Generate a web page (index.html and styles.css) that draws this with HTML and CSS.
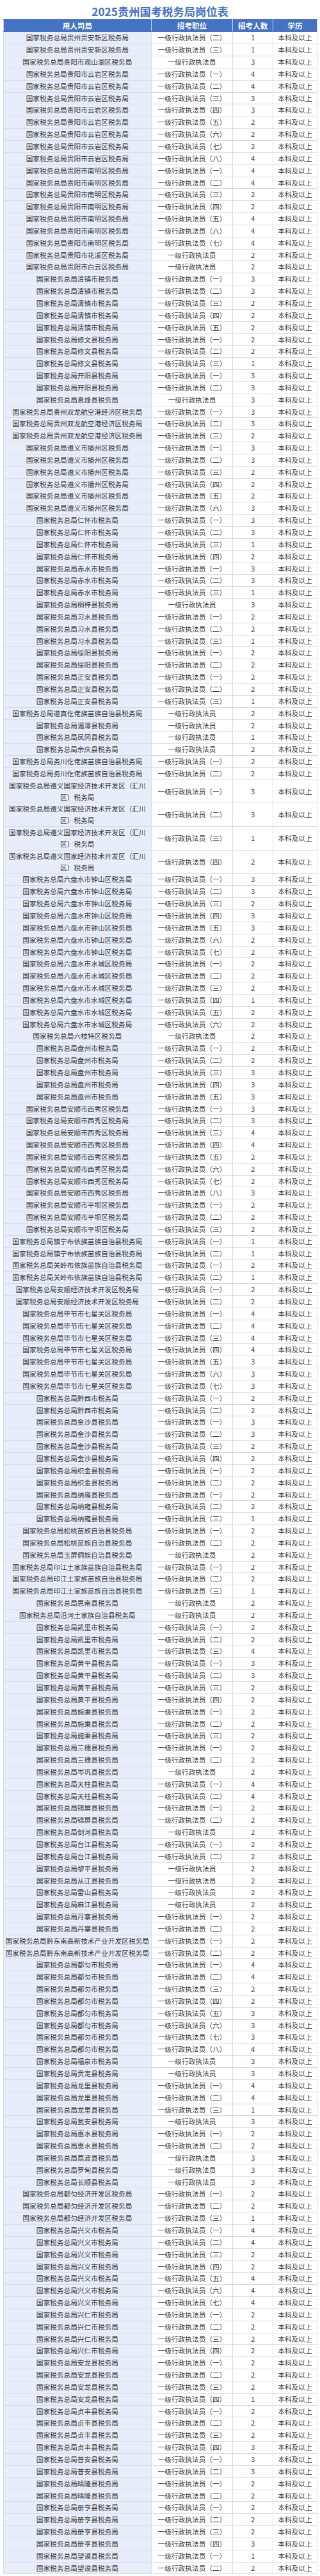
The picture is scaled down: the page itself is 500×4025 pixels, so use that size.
FILE: index.html
```html
<!DOCTYPE html>
<html lang="zh-CN">
<head>
<meta charset="utf-8">
<title>2025贵州国考税务局岗位表</title>
<link rel="stylesheet" href="styles.css">
</head>
<body>
<div class="page">
<h1 class="title">2025贵州国考税务局岗位表</h1>
<table class="jobs">
<colgroup><col class="c-org"><col class="c-pos"><col class="c-num"><col class="c-edu"></colgroup>
<thead><tr><th>用人司局</th><th>招考职位</th><th>招考人数</th><th>学历</th></tr></thead>
<tbody>
<tr><td class="org">国家税务总局贵州贵安新区税务局</td><td>一级行政执法员（二）</td><td>1</td><td>本科及以上</td></tr>
<tr><td class="org">国家税务总局贵州贵安新区税务局</td><td>一级行政执法员（三）</td><td>1</td><td>本科及以上</td></tr>
<tr><td class="org">国家税务总局贵阳市观山湖区税务局</td><td>一级行政执法员</td><td>3</td><td>本科及以上</td></tr>
<tr><td class="org">国家税务总局贵阳市云岩区税务局</td><td>一级行政执法员（一）</td><td>4</td><td>本科及以上</td></tr>
<tr><td class="org">国家税务总局贵阳市云岩区税务局</td><td>一级行政执法员（二）</td><td>4</td><td>本科及以上</td></tr>
<tr><td class="org">国家税务总局贵阳市云岩区税务局</td><td>一级行政执法员（三）</td><td>3</td><td>本科及以上</td></tr>
<tr><td class="org">国家税务总局贵阳市云岩区税务局</td><td>一级行政执法员（四）</td><td>3</td><td>本科及以上</td></tr>
<tr><td class="org">国家税务总局贵阳市云岩区税务局</td><td>一级行政执法员（五）</td><td>2</td><td>本科及以上</td></tr>
<tr><td class="org">国家税务总局贵阳市云岩区税务局</td><td>一级行政执法员（六）</td><td>2</td><td>本科及以上</td></tr>
<tr><td class="org">国家税务总局贵阳市云岩区税务局</td><td>一级行政执法员（七）</td><td>2</td><td>本科及以上</td></tr>
<tr><td class="org">国家税务总局贵阳市云岩区税务局</td><td>一级行政执法员（八）</td><td>4</td><td>本科及以上</td></tr>
<tr><td class="org">国家税务总局贵阳市南明区税务局</td><td>一级行政执法员（一）</td><td>4</td><td>本科及以上</td></tr>
<tr><td class="org">国家税务总局贵阳市南明区税务局</td><td>一级行政执法员（二）</td><td>4</td><td>本科及以上</td></tr>
<tr><td class="org">国家税务总局贵阳市南明区税务局</td><td>一级行政执法员（三）</td><td>2</td><td>本科及以上</td></tr>
<tr><td class="org">国家税务总局贵阳市南明区税务局</td><td>一级行政执法员（四）</td><td>2</td><td>本科及以上</td></tr>
<tr><td class="org">国家税务总局贵阳市南明区税务局</td><td>一级行政执法员（五）</td><td>4</td><td>本科及以上</td></tr>
<tr><td class="org">国家税务总局贵阳市南明区税务局</td><td>一级行政执法员（六）</td><td>4</td><td>本科及以上</td></tr>
<tr><td class="org">国家税务总局贵阳市南明区税务局</td><td>一级行政执法员（七）</td><td>4</td><td>本科及以上</td></tr>
<tr><td class="org">国家税务总局贵阳市花溪区税务局</td><td>一级行政执法员</td><td>2</td><td>本科及以上</td></tr>
<tr><td class="org">国家税务总局贵阳市白云区税务局</td><td>一级行政执法员</td><td>2</td><td>本科及以上</td></tr>
<tr><td class="org">国家税务总局清镇市税务局</td><td>一级行政执法员（一）</td><td>3</td><td>本科及以上</td></tr>
<tr><td class="org">国家税务总局清镇市税务局</td><td>一级行政执法员（二）</td><td>3</td><td>本科及以上</td></tr>
<tr><td class="org">国家税务总局清镇市税务局</td><td>一级行政执法员（三）</td><td>2</td><td>本科及以上</td></tr>
<tr><td class="org">国家税务总局清镇市税务局</td><td>一级行政执法员（四）</td><td>2</td><td>本科及以上</td></tr>
<tr><td class="org">国家税务总局清镇市税务局</td><td>一级行政执法员（五）</td><td>2</td><td>本科及以上</td></tr>
<tr><td class="org">国家税务总局修文县税务局</td><td>一级行政执法员（一）</td><td>2</td><td>本科及以上</td></tr>
<tr><td class="org">国家税务总局修文县税务局</td><td>一级行政执法员（二）</td><td>2</td><td>本科及以上</td></tr>
<tr><td class="org">国家税务总局修文县税务局</td><td>一级行政执法员（三）</td><td>1</td><td>本科及以上</td></tr>
<tr><td class="org">国家税务总局开阳县税务局</td><td>一级行政执法员（一）</td><td>3</td><td>本科及以上</td></tr>
<tr><td class="org">国家税务总局开阳县税务局</td><td>一级行政执法员（二）</td><td>3</td><td>本科及以上</td></tr>
<tr><td class="org">国家税务总局息烽县税务局</td><td>一级行政执法员</td><td>3</td><td>本科及以上</td></tr>
<tr><td class="org">国家税务总局贵州双龙航空港经济区税务局</td><td>一级行政执法员（一）</td><td>3</td><td>本科及以上</td></tr>
<tr><td class="org">国家税务总局贵州双龙航空港经济区税务局</td><td>一级行政执法员（二）</td><td>3</td><td>本科及以上</td></tr>
<tr><td class="org">国家税务总局贵州双龙航空港经济区税务局</td><td>一级行政执法员（三）</td><td>2</td><td>本科及以上</td></tr>
<tr><td class="org">国家税务总局遵义市播州区税务局</td><td>一级行政执法员（一）</td><td>3</td><td>本科及以上</td></tr>
<tr><td class="org">国家税务总局遵义市播州区税务局</td><td>一级行政执法员（二）</td><td>3</td><td>本科及以上</td></tr>
<tr><td class="org">国家税务总局遵义市播州区税务局</td><td>一级行政执法员（三）</td><td>2</td><td>本科及以上</td></tr>
<tr><td class="org">国家税务总局遵义市播州区税务局</td><td>一级行政执法员（四）</td><td>2</td><td>本科及以上</td></tr>
<tr><td class="org">国家税务总局遵义市播州区税务局</td><td>一级行政执法员（五）</td><td>2</td><td>本科及以上</td></tr>
<tr><td class="org">国家税务总局遵义市播州区税务局</td><td>一级行政执法员（六）</td><td>3</td><td>本科及以上</td></tr>
<tr><td class="org">国家税务总局仁怀市税务局</td><td>一级行政执法员（一）</td><td>3</td><td>本科及以上</td></tr>
<tr><td class="org">国家税务总局仁怀市税务局</td><td>一级行政执法员（二）</td><td>3</td><td>本科及以上</td></tr>
<tr><td class="org">国家税务总局仁怀市税务局</td><td>一级行政执法员（三）</td><td>1</td><td>本科及以上</td></tr>
<tr><td class="org">国家税务总局仁怀市税务局</td><td>一级行政执法员（四）</td><td>2</td><td>本科及以上</td></tr>
<tr><td class="org">国家税务总局赤水市税务局</td><td>一级行政执法员（一）</td><td>3</td><td>本科及以上</td></tr>
<tr><td class="org">国家税务总局赤水市税务局</td><td>一级行政执法员（二）</td><td>3</td><td>本科及以上</td></tr>
<tr><td class="org">国家税务总局赤水市税务局</td><td>一级行政执法员（三）</td><td>1</td><td>本科及以上</td></tr>
<tr><td class="org">国家税务总局桐梓县税务局</td><td>一级行政执法员</td><td>3</td><td>本科及以上</td></tr>
<tr><td class="org">国家税务总局习水县税务局</td><td>一级行政执法员（一）</td><td>2</td><td>本科及以上</td></tr>
<tr><td class="org">国家税务总局习水县税务局</td><td>一级行政执法员（二）</td><td>2</td><td>本科及以上</td></tr>
<tr><td class="org">国家税务总局习水县税务局</td><td>一级行政执法员（三）</td><td>1</td><td>本科及以上</td></tr>
<tr><td class="org">国家税务总局绥阳县税务局</td><td>一级行政执法员（一）</td><td>2</td><td>本科及以上</td></tr>
<tr><td class="org">国家税务总局绥阳县税务局</td><td>一级行政执法员（二）</td><td>2</td><td>本科及以上</td></tr>
<tr><td class="org">国家税务总局正安县税务局</td><td>一级行政执法员（一）</td><td>2</td><td>本科及以上</td></tr>
<tr><td class="org">国家税务总局正安县税务局</td><td>一级行政执法员（二）</td><td>2</td><td>本科及以上</td></tr>
<tr><td class="org">国家税务总局正安县税务局</td><td>一级行政执法员（三）</td><td>1</td><td>本科及以上</td></tr>
<tr><td class="org">国家税务总局道真仡佬族苗族自治县税务局</td><td>一级行政执法员</td><td>2</td><td>本科及以上</td></tr>
<tr><td class="org">国家税务总局湄潭县税务局</td><td>一级行政执法员</td><td>2</td><td>本科及以上</td></tr>
<tr><td class="org">国家税务总局凤冈县税务局</td><td>一级行政执法员</td><td>1</td><td>本科及以上</td></tr>
<tr><td class="org">国家税务总局余庆县税务局</td><td>一级行政执法员</td><td>2</td><td>本科及以上</td></tr>
<tr><td class="org">国家税务总局务川仡佬族苗族自治县税务局</td><td>一级行政执法员（一）</td><td>2</td><td>本科及以上</td></tr>
<tr><td class="org">国家税务总局务川仡佬族苗族自治县税务局</td><td>一级行政执法员（二）</td><td>2</td><td>本科及以上</td></tr>
<tr><td class="org">国家税务总局遵义国家经济技术开发区（汇川区）税务局</td><td>一级行政执法员（一）</td><td>3</td><td>本科及以上</td></tr>
<tr><td class="org">国家税务总局遵义国家经济技术开发区（汇川区）税务局</td><td>一级行政执法员（二）</td><td>3</td><td>本科及以上</td></tr>
<tr><td class="org">国家税务总局遵义国家经济技术开发区（汇川区）税务局</td><td>一级行政执法员（三）</td><td>1</td><td>本科及以上</td></tr>
<tr><td class="org">国家税务总局遵义国家经济技术开发区（汇川区）税务局</td><td>一级行政执法员（四）</td><td>2</td><td>本科及以上</td></tr>
<tr><td class="org">国家税务总局六盘水市钟山区税务局</td><td>一级行政执法员（一）</td><td>3</td><td>本科及以上</td></tr>
<tr><td class="org">国家税务总局六盘水市钟山区税务局</td><td>一级行政执法员（二）</td><td>3</td><td>本科及以上</td></tr>
<tr><td class="org">国家税务总局六盘水市钟山区税务局</td><td>一级行政执法员（三）</td><td>2</td><td>本科及以上</td></tr>
<tr><td class="org">国家税务总局六盘水市钟山区税务局</td><td>一级行政执法员（四）</td><td>3</td><td>本科及以上</td></tr>
<tr><td class="org">国家税务总局六盘水市钟山区税务局</td><td>一级行政执法员（五）</td><td>3</td><td>本科及以上</td></tr>
<tr><td class="org">国家税务总局六盘水市钟山区税务局</td><td>一级行政执法员（六）</td><td>2</td><td>本科及以上</td></tr>
<tr><td class="org">国家税务总局六盘水市钟山区税务局</td><td>一级行政执法员（七）</td><td>2</td><td>本科及以上</td></tr>
<tr><td class="org">国家税务总局六盘水市水城区税务局</td><td>一级行政执法员（一）</td><td>2</td><td>本科及以上</td></tr>
<tr><td class="org">国家税务总局六盘水市水城区税务局</td><td>一级行政执法员（二）</td><td>2</td><td>本科及以上</td></tr>
<tr><td class="org">国家税务总局六盘水市水城区税务局</td><td>一级行政执法员（三）</td><td>2</td><td>本科及以上</td></tr>
<tr><td class="org">国家税务总局六盘水市水城区税务局</td><td>一级行政执法员（四）</td><td>1</td><td>本科及以上</td></tr>
<tr><td class="org">国家税务总局六盘水市水城区税务局</td><td>一级行政执法员（五）</td><td>2</td><td>本科及以上</td></tr>
<tr><td class="org">国家税务总局六盘水市水城区税务局</td><td>一级行政执法员（六）</td><td>2</td><td>本科及以上</td></tr>
<tr><td class="org">国家税务总局六枝特区税务局</td><td>一级行政执法员</td><td>2</td><td>本科及以上</td></tr>
<tr><td class="org">国家税务总局盘州市税务局</td><td>一级行政执法员（一）</td><td>2</td><td>本科及以上</td></tr>
<tr><td class="org">国家税务总局盘州市税务局</td><td>一级行政执法员（二）</td><td>2</td><td>本科及以上</td></tr>
<tr><td class="org">国家税务总局盘州市税务局</td><td>一级行政执法员（三）</td><td>3</td><td>本科及以上</td></tr>
<tr><td class="org">国家税务总局盘州市税务局</td><td>一级行政执法员（四）</td><td>3</td><td>本科及以上</td></tr>
<tr><td class="org">国家税务总局盘州市税务局</td><td>一级行政执法员（五）</td><td>3</td><td>本科及以上</td></tr>
<tr><td class="org">国家税务总局安顺市西秀区税务局</td><td>一级行政执法员（一）</td><td>3</td><td>本科及以上</td></tr>
<tr><td class="org">国家税务总局安顺市西秀区税务局</td><td>一级行政执法员（二）</td><td>3</td><td>本科及以上</td></tr>
<tr><td class="org">国家税务总局安顺市西秀区税务局</td><td>一级行政执法员（三）</td><td>4</td><td>本科及以上</td></tr>
<tr><td class="org">国家税务总局安顺市西秀区税务局</td><td>一级行政执法员（四）</td><td>4</td><td>本科及以上</td></tr>
<tr><td class="org">国家税务总局安顺市西秀区税务局</td><td>一级行政执法员（五）</td><td>2</td><td>本科及以上</td></tr>
<tr><td class="org">国家税务总局安顺市西秀区税务局</td><td>一级行政执法员（六）</td><td>2</td><td>本科及以上</td></tr>
<tr><td class="org">国家税务总局安顺市西秀区税务局</td><td>一级行政执法员（七）</td><td>2</td><td>本科及以上</td></tr>
<tr><td class="org">国家税务总局安顺市西秀区税务局</td><td>一级行政执法员（八）</td><td>3</td><td>本科及以上</td></tr>
<tr><td class="org">国家税务总局安顺市平坝区税务局</td><td>一级行政执法员（一）</td><td>2</td><td>本科及以上</td></tr>
<tr><td class="org">国家税务总局安顺市平坝区税务局</td><td>一级行政执法员（二）</td><td>2</td><td>本科及以上</td></tr>
<tr><td class="org">国家税务总局安顺市平坝区税务局</td><td>一级行政执法员（三）</td><td>2</td><td>本科及以上</td></tr>
<tr><td class="org">国家税务总局镇宁布依族苗族自治县税务局</td><td>一级行政执法员（一）</td><td>1</td><td>本科及以上</td></tr>
<tr><td class="org">国家税务总局镇宁布依族苗族自治县税务局</td><td>一级行政执法员（二）</td><td>1</td><td>本科及以上</td></tr>
<tr><td class="org">国家税务总局关岭布依族苗族自治县税务局</td><td>一级行政执法员（一）</td><td>2</td><td>本科及以上</td></tr>
<tr><td class="org">国家税务总局关岭布依族苗族自治县税务局</td><td>一级行政执法员（二）</td><td>1</td><td>本科及以上</td></tr>
<tr><td class="org">国家税务总局安顺经济技术开发区税务局</td><td>一级行政执法员（一）</td><td>2</td><td>本科及以上</td></tr>
<tr><td class="org">国家税务总局安顺经济技术开发区税务局</td><td>一级行政执法员（二）</td><td>2</td><td>本科及以上</td></tr>
<tr><td class="org">国家税务总局毕节市七星关区税务局</td><td>一级行政执法员（一）</td><td>4</td><td>本科及以上</td></tr>
<tr><td class="org">国家税务总局毕节市七星关区税务局</td><td>一级行政执法员（二）</td><td>4</td><td>本科及以上</td></tr>
<tr><td class="org">国家税务总局毕节市七星关区税务局</td><td>一级行政执法员（三）</td><td>4</td><td>本科及以上</td></tr>
<tr><td class="org">国家税务总局毕节市七星关区税务局</td><td>一级行政执法员（四）</td><td>4</td><td>本科及以上</td></tr>
<tr><td class="org">国家税务总局毕节市七星关区税务局</td><td>一级行政执法员（五）</td><td>3</td><td>本科及以上</td></tr>
<tr><td class="org">国家税务总局毕节市七星关区税务局</td><td>一级行政执法员（六）</td><td>3</td><td>本科及以上</td></tr>
<tr><td class="org">国家税务总局毕节市七星关区税务局</td><td>一级行政执法员（七）</td><td>3</td><td>本科及以上</td></tr>
<tr><td class="org">国家税务总局黔西市税务局</td><td>一级行政执法员（一）</td><td>2</td><td>本科及以上</td></tr>
<tr><td class="org">国家税务总局黔西市税务局</td><td>一级行政执法员（二）</td><td>2</td><td>本科及以上</td></tr>
<tr><td class="org">国家税务总局金沙县税务局</td><td>一级行政执法员（一）</td><td>3</td><td>本科及以上</td></tr>
<tr><td class="org">国家税务总局金沙县税务局</td><td>一级行政执法员（二）</td><td>3</td><td>本科及以上</td></tr>
<tr><td class="org">国家税务总局金沙县税务局</td><td>一级行政执法员（三）</td><td>2</td><td>本科及以上</td></tr>
<tr><td class="org">国家税务总局金沙县税务局</td><td>一级行政执法员（四）</td><td>2</td><td>本科及以上</td></tr>
<tr><td class="org">国家税务总局织金县税务局</td><td>一级行政执法员（一）</td><td>2</td><td>本科及以上</td></tr>
<tr><td class="org">国家税务总局织金县税务局</td><td>一级行政执法员（二）</td><td>2</td><td>本科及以上</td></tr>
<tr><td class="org">国家税务总局纳雍县税务局</td><td>一级行政执法员（一）</td><td>2</td><td>本科及以上</td></tr>
<tr><td class="org">国家税务总局纳雍县税务局</td><td>一级行政执法员（二）</td><td>2</td><td>本科及以上</td></tr>
<tr><td class="org">国家税务总局纳雍县税务局</td><td>一级行政执法员（三）</td><td>1</td><td>本科及以上</td></tr>
<tr><td class="org">国家税务总局松桃苗族自治县税务局</td><td>一级行政执法员（一）</td><td>2</td><td>本科及以上</td></tr>
<tr><td class="org">国家税务总局松桃苗族自治县税务局</td><td>一级行政执法员（二）</td><td>2</td><td>本科及以上</td></tr>
<tr><td class="org">国家税务总局玉屏侗族自治县税务局</td><td>一级行政执法员</td><td>2</td><td>本科及以上</td></tr>
<tr><td class="org">国家税务总局印江土家族苗族自治县税务局</td><td>一级行政执法员（一）</td><td>2</td><td>本科及以上</td></tr>
<tr><td class="org">国家税务总局印江土家族苗族自治县税务局</td><td>一级行政执法员（二）</td><td>2</td><td>本科及以上</td></tr>
<tr><td class="org">国家税务总局印江土家族苗族自治县税务局</td><td>一级行政执法员（三）</td><td>1</td><td>本科及以上</td></tr>
<tr><td class="org">国家税务总局思南县税务局</td><td>一级行政执法员</td><td>2</td><td>本科及以上</td></tr>
<tr><td class="org">国家税务总局沿河土家族自治县税务局</td><td>一级行政执法员</td><td>2</td><td>本科及以上</td></tr>
<tr><td class="org">国家税务总局凯里市税务局</td><td>一级行政执法员（一）</td><td>2</td><td>本科及以上</td></tr>
<tr><td class="org">国家税务总局凯里市税务局</td><td>一级行政执法员（二）</td><td>2</td><td>本科及以上</td></tr>
<tr><td class="org">国家税务总局凯里市税务局</td><td>一级行政执法员（三）</td><td>4</td><td>本科及以上</td></tr>
<tr><td class="org">国家税务总局黄平县税务局</td><td>一级行政执法员（一）</td><td>3</td><td>本科及以上</td></tr>
<tr><td class="org">国家税务总局黄平县税务局</td><td>一级行政执法员（二）</td><td>3</td><td>本科及以上</td></tr>
<tr><td class="org">国家税务总局黄平县税务局</td><td>一级行政执法员（三）</td><td>2</td><td>本科及以上</td></tr>
<tr><td class="org">国家税务总局黄平县税务局</td><td>一级行政执法员（四）</td><td>2</td><td>本科及以上</td></tr>
<tr><td class="org">国家税务总局施秉县税务局</td><td>一级行政执法员（一）</td><td>2</td><td>本科及以上</td></tr>
<tr><td class="org">国家税务总局施秉县税务局</td><td>一级行政执法员（二）</td><td>2</td><td>本科及以上</td></tr>
<tr><td class="org">国家税务总局施秉县税务局</td><td>一级行政执法员（三）</td><td>2</td><td>本科及以上</td></tr>
<tr><td class="org">国家税务总局三穗县税务局</td><td>一级行政执法员（一）</td><td>2</td><td>本科及以上</td></tr>
<tr><td class="org">国家税务总局三穗县税务局</td><td>一级行政执法员（二）</td><td>2</td><td>本科及以上</td></tr>
<tr><td class="org">国家税务总局岑巩县税务局</td><td>一级行政执法员</td><td>2</td><td>本科及以上</td></tr>
<tr><td class="org">国家税务总局天柱县税务局</td><td>一级行政执法员（一）</td><td>4</td><td>本科及以上</td></tr>
<tr><td class="org">国家税务总局天柱县税务局</td><td>一级行政执法员（二）</td><td>4</td><td>本科及以上</td></tr>
<tr><td class="org">国家税务总局锦屏县税务局</td><td>一级行政执法员（一）</td><td>2</td><td>本科及以上</td></tr>
<tr><td class="org">国家税务总局锦屏县税务局</td><td>一级行政执法员（二）</td><td>2</td><td>本科及以上</td></tr>
<tr><td class="org">国家税务总局剑河县税务局</td><td>一级行政执法员</td><td>2</td><td>本科及以上</td></tr>
<tr><td class="org">国家税务总局台江县税务局</td><td>一级行政执法员（一）</td><td>2</td><td>本科及以上</td></tr>
<tr><td class="org">国家税务总局台江县税务局</td><td>一级行政执法员（二）</td><td>2</td><td>本科及以上</td></tr>
<tr><td class="org">国家税务总局黎平县税务局</td><td>一级行政执法员</td><td>2</td><td>本科及以上</td></tr>
<tr><td class="org">国家税务总局从江县税务局</td><td>一级行政执法员</td><td>2</td><td>本科及以上</td></tr>
<tr><td class="org">国家税务总局雷山县税务局</td><td>一级行政执法员</td><td>2</td><td>本科及以上</td></tr>
<tr><td class="org">国家税务总局麻江县税务局</td><td>一级行政执法员</td><td>2</td><td>本科及以上</td></tr>
<tr><td class="org">国家税务总局丹寨县税务局</td><td>一级行政执法员（一）</td><td>2</td><td>本科及以上</td></tr>
<tr><td class="org">国家税务总局丹寨县税务局</td><td>一级行政执法员（二）</td><td>2</td><td>本科及以上</td></tr>
<tr><td class="org">国家税务总局黔东南高新技术产业开发区税务局</td><td>一级行政执法员（一）</td><td>2</td><td>本科及以上</td></tr>
<tr><td class="org">国家税务总局黔东南高新技术产业开发区税务局</td><td>一级行政执法员（二）</td><td>2</td><td>本科及以上</td></tr>
<tr><td class="org">国家税务总局都匀市税务局</td><td>一级行政执法员（一）</td><td>4</td><td>本科及以上</td></tr>
<tr><td class="org">国家税务总局都匀市税务局</td><td>一级行政执法员（二）</td><td>4</td><td>本科及以上</td></tr>
<tr><td class="org">国家税务总局都匀市税务局</td><td>一级行政执法员（三）</td><td>2</td><td>本科及以上</td></tr>
<tr><td class="org">国家税务总局都匀市税务局</td><td>一级行政执法员（四）</td><td>2</td><td>本科及以上</td></tr>
<tr><td class="org">国家税务总局都匀市税务局</td><td>一级行政执法员（五）</td><td>3</td><td>本科及以上</td></tr>
<tr><td class="org">国家税务总局都匀市税务局</td><td>一级行政执法员（六）</td><td>3</td><td>本科及以上</td></tr>
<tr><td class="org">国家税务总局都匀市税务局</td><td>一级行政执法员（七）</td><td>3</td><td>本科及以上</td></tr>
<tr><td class="org">国家税务总局都匀市税务局</td><td>一级行政执法员（八）</td><td>4</td><td>本科及以上</td></tr>
<tr><td class="org">国家税务总局福泉市税务局</td><td>一级行政执法员</td><td>3</td><td>本科及以上</td></tr>
<tr><td class="org">国家税务总局贵定县税务局</td><td>一级行政执法员</td><td>3</td><td>本科及以上</td></tr>
<tr><td class="org">国家税务总局龙里县税务局</td><td>一级行政执法员（一）</td><td>4</td><td>本科及以上</td></tr>
<tr><td class="org">国家税务总局龙里县税务局</td><td>一级行政执法员（二）</td><td>4</td><td>本科及以上</td></tr>
<tr><td class="org">国家税务总局龙里县税务局</td><td>一级行政执法员（三）</td><td>1</td><td>本科及以上</td></tr>
<tr><td class="org">国家税务总局瓮安县税务局</td><td>一级行政执法员</td><td>3</td><td>本科及以上</td></tr>
<tr><td class="org">国家税务总局惠水县税务局</td><td>一级行政执法员（一）</td><td>2</td><td>本科及以上</td></tr>
<tr><td class="org">国家税务总局惠水县税务局</td><td>一级行政执法员（二）</td><td>2</td><td>本科及以上</td></tr>
<tr><td class="org">国家税务总局荔波县税务局</td><td>一级行政执法员</td><td>3</td><td>本科及以上</td></tr>
<tr><td class="org">国家税务总局罗甸县税务局</td><td>一级行政执法员</td><td>3</td><td>本科及以上</td></tr>
<tr><td class="org">国家税务总局长顺县税务局</td><td>一级行政执法员</td><td>3</td><td>本科及以上</td></tr>
<tr><td class="org">国家税务总局都匀经济开发区税务局</td><td>一级行政执法员（一）</td><td>2</td><td>本科及以上</td></tr>
<tr><td class="org">国家税务总局都匀经济开发区税务局</td><td>一级行政执法员（二）</td><td>2</td><td>本科及以上</td></tr>
<tr><td class="org">国家税务总局都匀经济开发区税务局</td><td>一级行政执法员（三）</td><td>1</td><td>本科及以上</td></tr>
<tr><td class="org">国家税务总局兴义市税务局</td><td>一级行政执法员（一）</td><td>4</td><td>本科及以上</td></tr>
<tr><td class="org">国家税务总局兴义市税务局</td><td>一级行政执法员（二）</td><td>4</td><td>本科及以上</td></tr>
<tr><td class="org">国家税务总局兴义市税务局</td><td>一级行政执法员（三）</td><td>2</td><td>本科及以上</td></tr>
<tr><td class="org">国家税务总局兴义市税务局</td><td>一级行政执法员（四）</td><td>2</td><td>本科及以上</td></tr>
<tr><td class="org">国家税务总局兴义市税务局</td><td>一级行政执法员（五）</td><td>4</td><td>本科及以上</td></tr>
<tr><td class="org">国家税务总局兴义市税务局</td><td>一级行政执法员（六）</td><td>4</td><td>本科及以上</td></tr>
<tr><td class="org">国家税务总局兴义市税务局</td><td>一级行政执法员（七）</td><td>4</td><td>本科及以上</td></tr>
<tr><td class="org">国家税务总局兴仁市税务局</td><td>一级行政执法员（一）</td><td>2</td><td>本科及以上</td></tr>
<tr><td class="org">国家税务总局兴仁市税务局</td><td>一级行政执法员（二）</td><td>2</td><td>本科及以上</td></tr>
<tr><td class="org">国家税务总局兴仁市税务局</td><td>一级行政执法员（三）</td><td>2</td><td>本科及以上</td></tr>
<tr><td class="org">国家税务总局兴仁市税务局</td><td>一级行政执法员（四）</td><td>2</td><td>本科及以上</td></tr>
<tr><td class="org">国家税务总局安龙县税务局</td><td>一级行政执法员（一）</td><td>2</td><td>本科及以上</td></tr>
<tr><td class="org">国家税务总局安龙县税务局</td><td>一级行政执法员（二）</td><td>2</td><td>本科及以上</td></tr>
<tr><td class="org">国家税务总局安龙县税务局</td><td>一级行政执法员（三）</td><td>2</td><td>本科及以上</td></tr>
<tr><td class="org">国家税务总局安龙县税务局</td><td>一级行政执法员（四）</td><td>1</td><td>本科及以上</td></tr>
<tr><td class="org">国家税务总局贞丰县税务局</td><td>一级行政执法员（一）</td><td>2</td><td>本科及以上</td></tr>
<tr><td class="org">国家税务总局贞丰县税务局</td><td>一级行政执法员（二）</td><td>2</td><td>本科及以上</td></tr>
<tr><td class="org">国家税务总局贞丰县税务局</td><td>一级行政执法员（三）</td><td>2</td><td>本科及以上</td></tr>
<tr><td class="org">国家税务总局贞丰县税务局</td><td>一级行政执法员（四）</td><td>3</td><td>本科及以上</td></tr>
<tr><td class="org">国家税务总局普安县税务局</td><td>一级行政执法员（一）</td><td>3</td><td>本科及以上</td></tr>
<tr><td class="org">国家税务总局普安县税务局</td><td>一级行政执法员（二）</td><td>3</td><td>本科及以上</td></tr>
<tr><td class="org">国家税务总局晴隆县税务局</td><td>一级行政执法员（一）</td><td>2</td><td>本科及以上</td></tr>
<tr><td class="org">国家税务总局晴隆县税务局</td><td>一级行政执法员（二）</td><td>2</td><td>本科及以上</td></tr>
<tr><td class="org">国家税务总局册亨县税务局</td><td>一级行政执法员（一）</td><td>2</td><td>本科及以上</td></tr>
<tr><td class="org">国家税务总局册亨县税务局</td><td>一级行政执法员（二）</td><td>2</td><td>本科及以上</td></tr>
<tr><td class="org">国家税务总局册亨县税务局</td><td>一级行政执法员（三）</td><td>2</td><td>本科及以上</td></tr>
<tr><td class="org">国家税务总局册亨县税务局</td><td>一级行政执法员（四）</td><td>3</td><td>本科及以上</td></tr>
<tr><td class="org">国家税务总局望谟县税务局</td><td>一级行政执法员（一）</td><td>1</td><td>本科及以上</td></tr>
<tr><td class="org">国家税务总局望谟县税务局</td><td>一级行政执法员（二）</td><td>2</td><td>本科及以上</td></tr>
</tbody>
</table>
</div>
</body>
</html>
```
FILE: styles.css
```css
html, body {
  margin: 0;
  padding: 0;
  background: #ffffff;
}

body {
  font-family: "Noto Sans CJK SC", "Noto Sans", sans-serif;
  color: #363636;
}

.page {
  padding: 0 5px 6px;
}

.title {
  margin: 0;
  height: 24px;
  padding-top: 6px;
  line-height: 24px;
  font-size: 17.3px;
  font-weight: 700;
  color: #4472c4;
  text-align: center;
  white-space: nowrap;
}

.jobs {
  width: 490px;
  table-layout: fixed;
  border-collapse: collapse;
  font-size: 10.7px;
}

.c-org { width: 230.7px; }
.c-pos { width: 127.6px; }
.c-num { width: 62.7px; }
.c-edu { width: 69px; }

.jobs th {
  background: #4472c4;
  color: #ffffff;
  font-size: 11.6px;
  font-weight: 700;
  line-height: 18.4px;
  padding: 0;
  text-align: center;
  border: 1px solid #4472c4;
  border-left-color: #c4d3ef;
  border-right-color: #c4d3ef;
}

.jobs td {
  text-align: center;
  vertical-align: middle;
  line-height: 17.84px;
  padding: 0 2px;
  border: 1px solid #d2dcf0;
  background: #ffffff;
}

.jobs td.org {
  background: #e8eef9;
}
```
